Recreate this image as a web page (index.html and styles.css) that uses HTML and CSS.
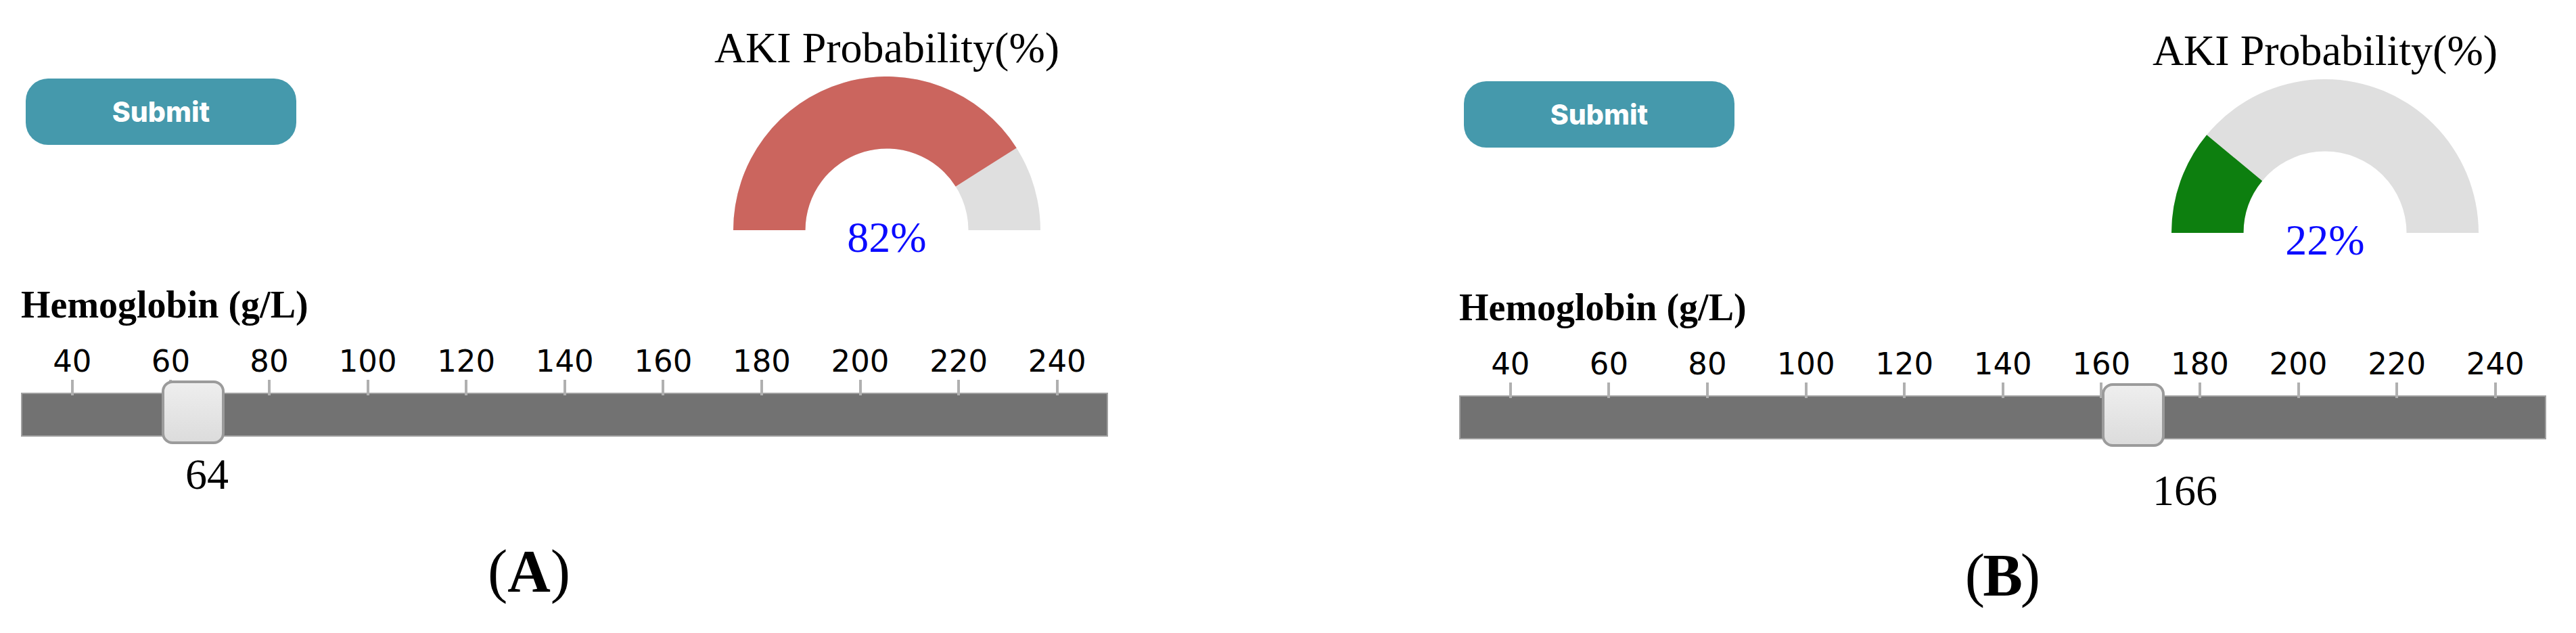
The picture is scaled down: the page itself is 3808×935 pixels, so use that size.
FILE: index.html
```html
<!DOCTYPE html>
<html lang="en">
<head>
    <meta charset="UTF-8">
    <meta name="viewport" content="width=device-width, initial-scale=1.0">
    <title>AKI Probability</title>
    <link rel="stylesheet" href="styles.css">
</head>
<body>
    <div class="container">
        <div class="panel">
            <div class="top">
                <button class="submit">Submit</button>
                <div class="gauge">
                    <div class="gauge-title">AKI Probability(%)</div>
                    <svg width="454" height="227" viewBox="0 0 454 227">
                        <path fill="#dfdfdf" d="M0 227A227 227 0 0 1 454 227H347.5A120.5 120.5 0 0 0 106.5 227Z"/>
                        <path fill="#cb655e" d="M0 227A227 227 0 0 1 418.7 105.4L328.7 162.4A120.5 120.5 0 0 0 106.5 227Z"/>
                    </svg>
                    <div class="gauge-value">82%</div>
                </div>
            </div>
            <h3>Hemoglobin (g/L)</h3>
            <div class="scale">
                <span>40</span><span>60</span><span>80</span><span>100</span><span>120</span><span>140</span><span>160</span><span>180</span><span>200</span><span>220</span><span>240</span>
            </div>
            <div class="track"><div class="handle" style="left: 206px"></div></div>
            <div class="value low">64</div>
            <div class="caption">(<b>A</b>)</div>
        </div>

        <div class="panel second">
            <div class="top">
                <button class="submit">Submit</button>
                <div class="gauge">
                    <div class="gauge-title">AKI Probability(%)</div>
                    <svg width="454" height="227" viewBox="0 0 454 227">
                        <path fill="#dfdfdf" d="M0 227A227 227 0 0 1 454 227H347.5A120.5 120.5 0 0 0 106.5 227Z"/>
                        <path fill="#0d7f0f" d="M0 227A227 227 0 0 1 52.1 82.3L134.2 150.2A120.5 120.5 0 0 0 106.5 227Z"/>
                    </svg>
                    <div class="gauge-value">22%</div>
                </div>
            </div>
            <h3>Hemoglobin (g/L)</h3>
            <div class="scale">
                <span>40</span><span>60</span><span>80</span><span>100</span><span>120</span><span>140</span><span>160</span><span>180</span><span>200</span><span>220</span><span>240</span>
            </div>
            <div class="track"><div class="handle" style="left: 948px"></div></div>
            <div class="value high">166</div>
            <div class="caption">(<b>B</b>)</div>
        </div>
    </div>
</body>
</html>
```
FILE: styles.css
```css
body {
    font-family: "Liberation Serif", serif;
    background: white;
    color: black;
    margin: 0;
}
.container {
    display: flex;
    gap: 519px;
    height: 935px;
    padding-left: 31px;
    overflow: hidden;
}
.panel {
    width: 1607px;
    flex: none;
    padding-top: 39px;
}
.second {
    padding-top: 43px;
}
.top {
    display: flex;
    justify-content: space-between;
    height: 383px;
    padding: 0 72px 0 7px;
}
.submit {
    width: 400px;
    height: 98px;
    margin-top: 77px;
    padding: 0;
    border: none;
    border-radius: 33px;
    background: #4599ac;
    color: white;
    font-family: Inter, sans-serif;
    font-size: 41px;
    font-weight: 800;
}
.gauge {
    display: flex;
    flex-direction: column;
    align-items: center;
}
.gauge-title, .gauge-value, .value {
    font-size: 64px;
    line-height: 64px;
}
.gauge svg {
    margin-top: 10px;
}
.gauge-value {
    margin-top: -21px;
    color: #0b0bff;
}
h3 {
    margin: 0;
    font-size: 56px;
    line-height: 56px;
}
.scale {
    display: flex;
    position: relative;
    z-index: 1;
    margin: 33px 0 0 3px;
    font-family: "DejaVu Sans", sans-serif;
    font-size: 45px;
    line-height: 45px;
}
.scale span {
    width: 145.6px;
    text-align: center;
}
.scale span::after {
    content: "";
    display: block;
    width: 4px;
    height: 23px;
    margin: 5px auto 0;
    background: #b0b0b0;
}
.track {
    position: relative;
    height: 61px;
    margin-top: -4px;
    border: 2px solid #a0a0a0;
    background: #727272;
}
.handle {
    position: absolute;
    top: -20px;
    z-index: 2;
    box-sizing: border-box;
    width: 93px;
    height: 94px;
    border: 4px solid #9b9b9b;
    border-radius: 16px;
    background: linear-gradient(#eeeeee, #dcdcdc);
}
.value {
    margin-top: 24px;
}
.low {
    padding-left: 243px;
}
.high {
    margin-top: 44px;
    padding-left: 1025px;
}
.caption {
    width: 1502px;
    margin-top: 67px;
    text-align: center;
    font-size: 88px;
    line-height: 88px;
}
.second .caption {
    width: 1604px;
    margin-top: 49px;
    letter-spacing: -3px;
}
```
